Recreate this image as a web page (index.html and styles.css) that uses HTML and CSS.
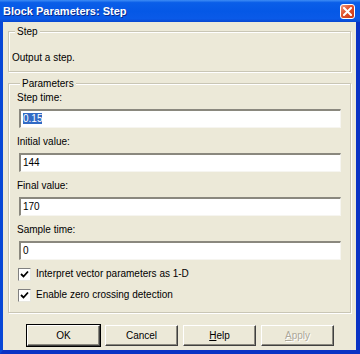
FILE: index.html
```html
<!DOCTYPE html>
<html lang="en">
    <head>
        <meta charset="UTF-8" />
        <title>Block Parameters: Step</title>
        <link rel="stylesheet" href="styles.css">
    </head>

    <body>
        <div class="window">
            <!-- title bar -->
            <div class="titlebar">
                <span class="title">Block Parameters: Step</span>
                <span class="close">
                    <svg width="9" height="9" viewBox="0 0 9 9">
                        <path d="M1 1 L8 8 M8 1 L1 8" stroke="#fff" stroke-width="2" stroke-linecap="square" />
                    </svg>
                </span>
            </div>

            <div class="content">
                <fieldset class="group step">
                    <legend>Step</legend>
                    <p>Output a step.</p>
                </fieldset>

                <fieldset class="group params">
                    <legend>Parameters</legend>

                    <label class="lbl">Step time:</label>
                    <div class="field"><span class="sel">0.15</span></div>

                    <label class="lbl">Initial value:</label>
                    <div class="field">144</div>

                    <label class="lbl">Final value:</label>
                    <div class="field">170</div>

                    <label class="lbl">Sample time:</label>
                    <div class="field">0</div>

                    <div class="check">
                        <span class="box">
                            <svg width="9" height="9" viewBox="0 0 9 9">
                                <path d="M1 4 L3.5 6.5 L8 1.5" fill="none" stroke="#000" stroke-width="1.8" />
                            </svg>
                        </span>
                        Interpret vector parameters as 1-D
                    </div>
                    <div class="check">
                        <span class="box">
                            <svg width="9" height="9" viewBox="0 0 9 9">
                                <path d="M1 4 L3.5 6.5 L8 1.5" fill="none" stroke="#000" stroke-width="1.8" />
                            </svg>
                        </span>
                        Enable zero crossing detection
                    </div>
                </fieldset>

                <!-- buttons -->
                <div class="buttons">
                    <div class="btn default">OK</div>
                    <div class="btn">Cancel</div>
                    <div class="btn"><u>H</u>elp</div>
                    <div class="btn disabled"><u>A</u>pply</div>
                </div>
            </div>
        </div>
    </body>
</html>
```

FILE: styles.css
```css
body {
    margin: 0;
    font-family: "Liberation Sans", Arial, sans-serif;
    font-size: 10px;
    color: #000;
}

.window {
    width: 360px;
    height: 354px;
    box-sizing: border-box;
    background: #ece9d8;
    border-left: 3px solid #0847d6;
    border-right: 4px solid #0a33c4;
    border-bottom: 4px solid #0a33c4;
    display: flex;
    flex-direction: column;
}

/* title bar */
.titlebar {
    height: 22px;
    flex: none;
    margin-left: -3px;
    margin-right: -4px;
    padding: 0 5px 0 3px;
    display: flex;
    align-items: center;
    justify-content: space-between;
    background: linear-gradient(#3d8cf5 0%, #0a5ee8 12%, #0558e6 50%, #0a5ae8 85%, #0847d0 100%);
}
.title {
    color: #fff;
    font-weight: bold;
    font-size: 11px;
    text-shadow: 1px 1px 0 #0a2a8a;
}
.close {
    width: 15px;
    height: 15px;
    box-sizing: border-box;
    border: 1px solid #fff;
    border-radius: 3px;
    background: linear-gradient(135deg, #f09a80, #e0502a 45%, #c8381a);
    display: flex;
    align-items: center;
    justify-content: center;
}

.content {
    padding: 3px 5px 0 5px;
}

/* group boxes */
.group {
    margin: 0;
    border: 1px solid #c9c6b5;
    box-shadow: 1px 1px 0 #fff, inset 1px 1px 0 #fff;
}
.group legend {
    margin-left: 3px;
    padding: 0 2px;
    background: #ece9d8;
    line-height: 13px;
}
.step {
    padding: 13px 3px 6px 3px;
}
.step p {
    margin: 0;
    line-height: 14px;
}
.params {
    margin-top: 5px;
    padding: 1px 9px 10px 8px;
}

.lbl {
    display: block;
    line-height: 14px;
}
.field {
    margin: 4px 0 7px 2px;
    height: 19px;
    box-sizing: border-box;
    background: #fff;
    border-top: 2px solid #8a887e;
    border-left: 2px solid #8a887e;
    border-right: 1px solid #f6f5f0;
    border-bottom: 1px solid #f6f5f0;
    padding: 1px 2px;
    line-height: 14px;
}
.sel {
    background: #316ac5;
    color: #fff;
}

.check {
    display: flex;
    align-items: center;
    gap: 5px;
    line-height: 14px;
    margin-top: 7px;
    padding-left: 1px;
}
.box {
    width: 13px;
    height: 13px;
    box-sizing: border-box;
    background: #fff;
    border-top: 1px solid #808080;
    border-left: 1px solid #808080;
    border-right: 1px solid #e8e8e0;
    border-bottom: 1px solid #e8e8e0;
    display: flex;
    align-items: center;
    justify-content: center;
}

/* buttons */
.buttons {
    display: flex;
    gap: 5px;
    margin-top: 12px;
    padding-left: 19px;
}
.btn {
    width: 73px;
    height: 21px;
    box-sizing: border-box;
    display: flex;
    align-items: center;
    justify-content: center;
    background: #ece9d8;
    border-top: 1px solid #fff;
    border-left: 1px solid #fff;
    border-right: 1px solid #404040;
    border-bottom: 1px solid #404040;
    box-shadow: inset -1px -1px 0 #8a887e;
}
.btn.default {
    outline: 1px solid #000;
}
.btn.disabled {
    color: #aca899;
    text-shadow: 1px 1px 0 #fff;
}
```
